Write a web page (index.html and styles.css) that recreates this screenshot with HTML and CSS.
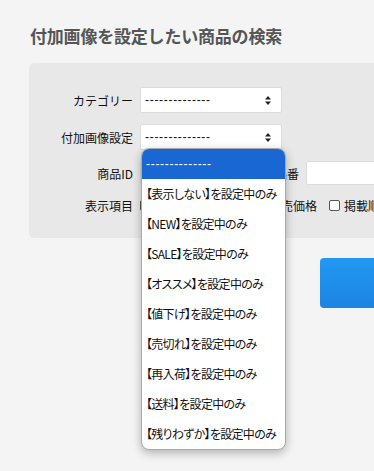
FILE: index.html
```html
<!DOCTYPE html>
<html lang="ja">
<head>
<meta charset="utf-8">
<link rel="stylesheet" href="styles.css">
</head>
<body>
<div class="page">
  <h1 class="title">付加画像を設定したい商品の検索</h1>
  <div class="panel">
    <div class="row row-select">
      <div class="label">カテゴリー</div>
      <div class="select"><span class="dashes">--------------</span>
        <svg class="arrows" width="6" height="9" viewBox="0 0 6 9"><path d="M3 0 L6 3.5 L0 3.5 Z M0 5.5 L6 5.5 L3 9 Z" fill="#222"/></svg>
      </div>
    </div>
    <div class="row row-select">
      <div class="label">付加画像設定</div>
      <div class="select"><span class="dashes">--------------</span>
        <svg class="arrows" width="6" height="9" viewBox="0 0 6 9"><path d="M3 0 L6 3.5 L0 3.5 Z M0 5.5 L6 5.5 L3 9 Z" fill="#222"/></svg>
      </div>
    </div>
    <div class="row row-input">
      <div class="label">商品ID</div>
      <div class="input short"></div>
      <div class="sublabel">品番</div>
      <div class="input long"></div>
    </div>
    <div class="row row-check">
      <div class="label">表示項目</div>
      <label class="check"><span class="box"></span>商品名</label>
      <label class="check"><span class="box"></span>品番</label>
      <label class="check"><span class="box"></span>販売価格</label>
      <label class="check"><span class="box"></span>掲載順</label>
    </div>
  </div>
  <div class="actions">
    <div class="button"></div>
  </div>

  <ul class="dropdown">
    <li class="opt selected">--------------</li>
    <li class="opt">【表示しない】を設定中のみ</li>
    <li class="opt">【NEW】を設定中のみ</li>
    <li class="opt">【SALE】を設定中のみ</li>
    <li class="opt">【オススメ】を設定中のみ</li>
    <li class="opt">【値下げ】を設定中のみ</li>
    <li class="opt">【売切れ】を設定中のみ</li>
    <li class="opt">【再入荷】を設定中のみ</li>
    <li class="opt">【送料】を設定中のみ</li>
    <li class="opt">【残りわずか】を設定中のみ</li>
  </ul>
</div>
</body>
</html>
```

FILE: styles.css
```css
* { box-sizing: border-box; }
html, body {
  margin: 0;
  padding: 0;
  background: #f4f4f4;
  width: 374px;
  height: 471px;
  overflow: hidden;
}
body {
  font-family: "Noto Sans CJK JP", "Noto Sans", sans-serif;
  font-size: 12px;
  color: #111;
}
.page {
  position: relative;
  padding: 26px 0 0 29px;
  height: 471px;
  overflow: hidden;
}
.title {
  margin: 0 0 0 1px;
  font-size: 17px;
  line-height: 20px;
  font-weight: bold;
  color: #555;
  letter-spacing: -0.2px;
}
.panel {
  margin-top: 17px;
  background: #e8e8e8;
  border-radius: 5px 0 0 5px;
  padding: 24px 0 23px 0;
  width: 345px;
  display: flex;
  flex-direction: column;
  gap: 11px;
  overflow: hidden;
}
.row {
  display: flex;
  align-items: center;
  white-space: nowrap;
}
.row > * { flex: none; }
.label {
  width: 104px;
  text-align: right;
  margin-right: 7px;
}
.select {
  width: 142px;
  height: 26px;
  background: #fff;
  border: 1px solid #dcdcdc;
  border-radius: 2px;
  display: flex;
  align-items: center;
  justify-content: space-between;
  padding: 0 10px 0 4px;
  font-family: "Liberation Sans", sans-serif;
  font-size: 12px;
  letter-spacing: 0.7px;
}
.dashes { line-height: 1; }
.arrows { flex: none; }
.row-input { height: 24px; }
.input {
  height: 24px;
  background: #fff;
  border: 1px solid #dcdcdc;
  border-radius: 2px;
}
.input.short { width: 126px; }
.input.long { width: 160px; }
.sublabel { margin: 0 7px 0 9px; }
.row-check { height: 20px; margin-top: -1px; }
.check {
  display: flex;
  align-items: center;
  margin-right: 12px;
}
.box {
  width: 11px;
  height: 11px;
  border: 1px solid #555;
  border-radius: 2px;
  background: #fff;
  margin-right: 4px;
  flex: none;
}
.actions {
  display: flex;
  justify-content: flex-end;
  margin-top: 20px;
}
.button {
  width: 54px;
  height: 50px;
  border-radius: 4px 0 0 4px;
  background: linear-gradient(#2298f3, #1c84e2);
}
.dropdown {
  position: absolute;
  left: 141px;
  top: 148px;
  width: 145px;
  margin: 0;
  padding: 0;
  list-style: none;
  background: #fff;
  border: 1px solid #a9a9a9;
  border-radius: 8px;
  box-shadow: 0 3px 10px rgba(0,0,0,0.28);
  overflow: hidden;
}
.opt {
  height: 30px;
  line-height: 30px;
  padding-left: 4px;
  font-size: 12px;
  font-feature-settings: "palt";
  letter-spacing: -0.7px;
  color: #111;
  white-space: nowrap;
}
.opt.selected {
  background: #1967d2;
  color: #fff;
  font-family: "Liberation Sans", sans-serif;
  letter-spacing: 0.7px;
}
```
